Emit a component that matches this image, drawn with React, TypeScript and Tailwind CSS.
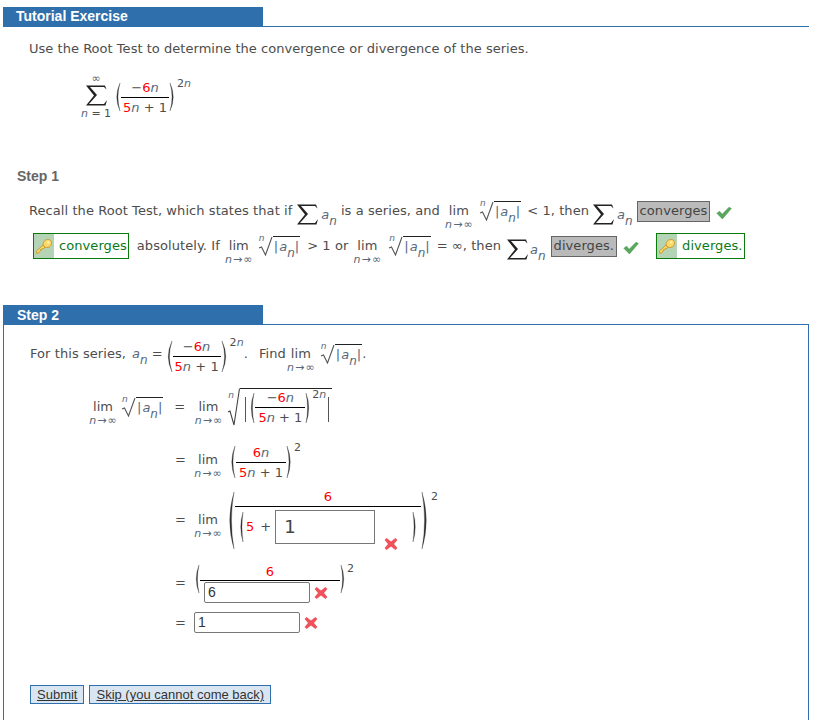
import React from "react";

const V = "font-['DejaVu_Sans',Verdana,sans-serif]";
const A = "font-['Liberation_Sans',Arial,sans-serif]";

const N = ({ s = "" }: { s?: string }) => <i className={"text-[#56687a] " + s}>n</i>;
const R = ({ children }: { children: React.ReactNode }) => <span className="text-[#f00]">{children}</span>;

const Lim = ({ className = "" }: { className?: string }) => (
  <span className={"inline-flex w-[30px] flex-col items-center leading-none " + className}>
    <span className="mt-[12px] text-[13px] leading-[13px]">lim</span>
    <span className="mt-[2px] flex items-center gap-[1px] whitespace-nowrap text-[11px] leading-[12px] text-[#56687a]">
      <i>n</i>
      <span>→</span>
      <span>∞</span>
    </span>
  </span>
);

const An = ({ s = "" }: { s?: string }) => (
  <span className={"inline-flex h-[16px] items-start tracking-normal " + s}>
    <i className="text-[13px] leading-[16px] text-[#56687a]">a</i>
    <i className="mt-[6px] text-[12px] leading-[16px] text-[#56687a]">n</i>
  </span>
);

const Sum = ({ className = "" }: { className?: string }) => (
  <svg width="23" height="23" viewBox="0 0 23 22" className={className}>
    <path d="M1 1H20L21.5 5L19 2.5H5L12 10.5L4 19.5H19L22 15.5L20.5 21H1L9 11Z" fill="#222" />
  </svg>
);

const Paren = ({ h, right = false, w = 8, t = 2.4, className = "" }: { h: number; right?: boolean; w?: number; t?: number; className?: string }) => (
  <svg width={w} height={h} viewBox={`0 0 ${w} ${h}`} className={"shrink-0 " + className}>
    <path
      d={
        right
          ? `M1 0Q${w - 0.5} ${h / 2} 1 ${h}Q${w - 0.5 - t} ${h / 2} 1 0Z`
          : `M${w - 1} 0Q0.5 ${h / 2} ${w - 1} ${h}Q${0.5 + t} ${h / 2} ${w - 1} 0Z`
      }
      fill="#333"
      stroke="#333"
      strokeWidth="0.3"
    />
  </svg>
);

const Root = ({ children, h = 20, ml = "" }: { children: React.ReactNode; h?: number; ml?: string }) => (
  <span className={"relative inline-flex items-stretch " + ml}>
    <i className="absolute left-[1px] -top-[3px] text-[9px] leading-[10px] text-[#56687a]">n</i>
    <svg width="15" height={h} viewBox={`0 0 15 ${h}`} className="shrink-0">
      <path d={`M1 ${h * 0.6}L3.5 ${h * 0.55}L7.5 ${h - 1}L14 1`} fill="none" stroke="#555" strokeWidth="1.1" />
    </svg>
    <span className="inline-flex items-center border-t border-[#222] px-[1px]">{children}</span>
  </span>
);

const AbsA = () => (
  <span className="inline-flex items-start whitespace-nowrap tracking-normal">
    <span className="text-[13px] leading-[18px] text-[#56687a]">|</span>
    <An s="ml-[1px] mt-[1px]" />
    <span className="text-[13px] leading-[18px] text-[#56687a]">|</span>
  </span>
);

const Frac = ({ top, bottom, w }: { top: React.ReactNode; bottom: React.ReactNode; w: number }) => (
  <span className="inline-flex flex-col items-center" style={{ width: w }}>
    <span className="whitespace-nowrap text-[13px] leading-[17px]">{top}</span>
    <span className="mt-[1px] h-px w-full bg-black" />
    <span className="mt-[1px] whitespace-nowrap text-[13px] leading-[17px]">{bottom}</span>
  </span>
);

const MainFrac = ({ w = 48 }: { w?: number }) => (
  <Frac w={w} top={<>−<R>6</R><N /></>} bottom={<><R>5</R><N /> + 1</>} />
);

const Key = () => (
  <span className="flex w-[20px] shrink-0 items-center justify-center self-stretch bg-[#b5d3b5]">
    <svg width="18" height="18" viewBox="0 0 17 17">
      <g stroke="#c98f1e" strokeWidth="0.8" fill="#f9d968">
        <path d="M1.3 13.4L7.4 7.7L9.5 9.7L8 11L7 10.6L6.5 12L5.3 11.8L5 13.2L3.2 15.3L1.6 15.3Z" />
        <path d="M8 5.2C9.2 2.6 12.4 1.4 14.5 3C16.4 4.6 15.7 8 13.6 9.3C11.9 10.4 9.6 10 8.3 8.7C7.7 7.6 7.6 6.2 8 5.2Z" />
      </g>
      <circle cx="12.6" cy="5.1" r="1.1" fill="#fff4b8" />
    </svg>
  </span>
);

const KeyBox = ({ text, className = "" }: { text: string; className?: string }) => (
  <span className={"inline-flex h-[26px] items-center border border-[#0a7a0a] bg-white pr-[1px] text-[#0a7a1a] " + className}>
    <Key />
    <span className="ml-[5px] whitespace-nowrap text-[13px]">{text}</span>
  </span>
);

const Answer = ({ text, className = "" }: { text: string; className?: string }) => (
  <span className={"inline-flex h-[21px] items-center whitespace-nowrap border border-[#666] bg-[#bababa] px-[2px] text-[13px] text-[#444] " + className}>
    {text}
  </span>
);

const Check = ({ className = "" }: { className?: string }) => (
  <svg width="16" height="14" viewBox="0 0 16 14" className={className}>
    <path d="M0.8 7.2L3.6 5.2L6.2 8.2L13 1.2L15.4 2.6L6.4 13Z" fill="#58a85c" stroke="#4a9650" strokeWidth="0.5" />
  </svg>
);

const Cross = ({ className = "" }: { className?: string }) => (
  <svg width="14" height="14" viewBox="0 0 14 14" className={className}>
    <path d="M2.6 1L7 4.6L11.4 1L13.4 3L10 7L13.4 11L11.4 13L7 9.4L2.6 13L0.6 11L4 7L0.6 3Z" fill="#f0525c" />
  </svg>
);

const Eq = ({ className = "" }: { className?: string }) => (
  <span className={"w-[10px] text-center text-[13px] " + className}>=</span>
);

const Sup2 = ({ children, className = "" }: { children: React.ReactNode; className?: string }) => (
  <span className={"self-start text-[11px] leading-[12px] " + className}>{children}</span>
);

export default function App() {
  return (
    <div className={"h-[720px] w-[821px] overflow-hidden bg-white pl-[3px] pr-[12px] pt-[7px] text-[13px] text-[#4d4d4d] " + V}>
      {/* Header */}
      <div className="border-b border-[#2f6fab]">
        <div className={"flex h-[19px] w-[260px] items-center bg-[#2f6fab] pl-[13px] text-[14px] font-bold text-white " + A}>
          Tutorial Exercise
        </div>
      </div>

      <p className="ml-[26px] mt-[13px] leading-[17px] tracking-[0.03px]">Use the Root Test to determine the convergence or divergence of the series.</p>

      {/* Series */}
      <div className="ml-[78px] mt-[13px] flex h-[54px] items-center">
        <span className="flex w-[30px] flex-col items-center">
          <span className="h-[11px] text-[11px] leading-[11px] text-[#56687a]">∞</span>
          <Sum />
          <span className="whitespace-nowrap text-[11px] leading-[14px]"><i className="text-[#56687a]">n</i> = 1</span>
        </span>
        <span className="ml-[2px] flex items-center">
          <Paren h={28} />
          <MainFrac />
          <Paren h={28} right />
          <Sup2 className="mt-[-1px]">2<N /></Sup2>
        </span>
      </div>

      <div className={"ml-[14px] mt-[43px] text-[14px] font-bold leading-[18px] text-[#666] " + A}>Step 1</div>

      {/* Step 1 rows */}
      <div className="ml-[26px] mt-[11px] flex h-[30px] items-center whitespace-nowrap tracking-[0.07px]">
        <span>Recall the Root Test, which states that if</span>
        <Sum className="ml-[4px] mt-[7px]" />
        <An s="ml-[2px] mt-[7px]" />
        <span className="ml-[4px]">is a series, and</span>
        <Lim className="ml-[4px]" />
        <Root ml="ml-[5px]"><AbsA /></Root>
        <span className="ml-[6px]">&lt; 1, then</span>
        <Sum className="ml-[3px] mt-[7px]" />
        <An s="ml-[2px] mt-[7px]" />
        <Answer text="converges" className="ml-[4px]" />
        <Check className="ml-[6px] mt-[4px]" />
      </div>
      <div className="ml-[30px] mt-[2px] flex h-[36px] items-center whitespace-nowrap tracking-[0.07px]">
        <KeyBox text="converges" />
        <span className="ml-[8px]">absolutely. If</span>
        <Lim className="ml-[4px]" />
        <Root ml="ml-[4px]"><AbsA /></Root>
        <span className="ml-[7px]">&gt; 1 or</span>
        <Lim className="ml-[4px]" />
        <Root ml="ml-[6px]"><AbsA /></Root>
        <span className="ml-[6px]">= ∞, then</span>
        <Sum className="ml-[5px] mt-[7px]" />
        <An s="ml-[1px] mt-[7px]" />
        <Answer text="diverges." className="ml-[5px]" />
        <Check className="ml-[6px] mt-[4px]" />
        <KeyBox text="diverges." className="ml-[17px]" />
      </div>

      {/* Step 2 */}
      <div className="relative mt-[41px]">
        <div className={"relative z-10 flex h-[20px] w-[260px] items-center bg-[#2f6fab] pl-[14px] text-[14px] font-bold text-white " + A}>Step 2</div>
        <div className="-mt-px h-[420px] border border-[#2f6fab] pl-[26px] pt-[9px]">
          <div className="flex h-[40px] items-center whitespace-nowrap tracking-[0.07px]">
            <span>For this series,</span>
            <An s="ml-[6px]" />
            <span className="ml-[4px]">=</span>
            <span className="ml-[1px] mt-[4px] flex items-center">
              <Paren h={31} w={9} />
              <MainFrac w={48} />
              <Paren h={31} w={9} right />
              <Sup2 className="mt-[-1px]">2<N /></Sup2>
            </span>
            <span>.</span>
            <span className="ml-[11px]">Find</span>
            <Lim />
            <Root ml="ml-[4px]"><AbsA /></Root>
            <span>.</span>
          </div>

          <div className="mt-[12px] flex h-[42px] items-center whitespace-nowrap">
            <Lim className="ml-[58px]" />
            <Root ml="ml-[3px]"><AbsA /></Root>
            <Eq className="ml-[11px]" />
            <Lim className="ml-[9px]" />
            <span className="relative ml-[4px] inline-flex items-stretch">
              <i className="absolute left-[1px] top-[2px] text-[9px] leading-[10px] text-[#56687a]">n</i>
              <svg width="13" height="38" viewBox="0 0 13 38" className="shrink-0">
                <path d="M1 24L3 23L7 37L12.5 0.5" fill="none" stroke="#444" strokeWidth="1.1" />
              </svg>
              <span className="inline-flex items-center border-t border-[#222]">
                <span className="ml-[5px] mt-[3px] h-[25px] w-px bg-[#555]" />
                <Paren h={30} w={7} className="ml-[2px]" />
                <MainFrac w={50} />
                <Paren h={30} w={7} right />
                <Sup2>2<N /></Sup2>
                <span className="ml-[2px] mr-[3px] mt-[3px] h-[25px] w-px bg-[#555]" />
              </span>
            </span>
          </div>

          <div className="mt-[11px] flex h-[42px] items-center whitespace-nowrap">
            <Eq className="ml-[145px]" />
            <Lim className="ml-[8px]" />
            <span className="ml-[5px] mt-[4px] flex items-center">
              <Paren h={32} w={8} />
              <Frac w={50} top={<><R>6</R><N /></>} bottom={<><R>5</R><N /> + 1</>} />
              <Paren h={32} w={8} right />
              <Sup2 className="mt-[-2px]">2</Sup2>
            </span>
          </div>

          <div className="mt-[8px] flex h-[62px] items-center whitespace-nowrap">
            <Eq className="ml-[145px]" />
            <Lim className="ml-[8px]" />
            <span className="ml-[2px] flex items-center">
              <Paren h={57} w={10} t={3.5} />
              <span className="-mt-[9px] inline-flex w-[186px] flex-col items-center">
                <span className="text-[13px] leading-[19px]"><R>6</R></span>
                <span className="h-px w-full bg-black" />
                <span className="mt-[3px] flex w-full items-center">
                  <Paren h={30} w={6} className="ml-[3px]" />
                  <span className="ml-[2px]"><R>5</R></span>
                  <span className="ml-[6px]">+</span>
                  <span className="ml-[4px] flex h-[34px] w-[100px] items-center border border-[#777] pl-[8px] text-[18px] leading-none text-[#444]">1</span>
                  <Cross className="-mb-[7px] ml-[9px] self-end" />
                  <Paren h={30} w={6} right className="ml-[14px]" />
                </span>
              </span>
              <Paren h={57} w={10} right t={3.5} />
              <Sup2 className="mt-[-1px]">2</Sup2>
            </span>
          </div>

          <div className="mt-[11px] flex h-[42px] items-center whitespace-nowrap">
            <Eq className="ml-[145px]" />
            <span className="ml-[8px] flex items-center">
              <Paren h={28} w={7} className="-mt-[8px]" />
              <span className="inline-flex w-[140px] flex-col">
                <span className="text-center text-[13px] leading-[17px]"><R>6</R></span>
                <span className="h-px w-full bg-black" />
                <span className="mt-[1px] flex items-center">
                  <span className={"ml-[4px] flex h-[21px] w-[106px] items-center rounded-[2px] border border-[#777] pl-[3px] text-[14px] text-[#333] " + A}>6</span>
                  <Cross className="ml-[4px]" />
                </span>
              </span>
              <Paren h={28} w={7} right className="-mt-[8px]" />
              <Sup2>2</Sup2>
            </span>
          </div>

          <div className="mt-[8px] flex h-[21px] items-center whitespace-nowrap">
            <Eq className="ml-[145px]" />
            <span className={"ml-[9px] flex h-[21px] w-[106px] items-center rounded-[2px] border border-[#777] pl-[3px] text-[14px] text-[#333] " + A}>1</span>
            <Cross className="ml-[4px]" />
          </div>

          <div className={"mt-[52px] flex gap-[5px] text-[13px] text-[#333] underline " + A}>
            <span className="flex h-[19px] items-center border border-[#2f6fab] bg-[#d9e6f2] px-[6px]">Submit</span>
            <span className="flex h-[19px] items-center border border-[#2f6fab] bg-[#d9e6f2] px-[6px]">Skip (you cannot come back)</span>
          </div>
        </div>
      </div>
    </div>
  );
}
